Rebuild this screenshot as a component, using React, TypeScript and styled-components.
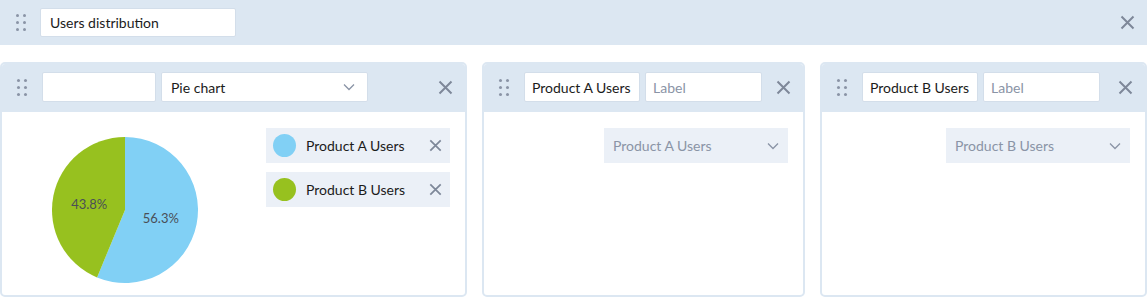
import React, { FC } from "react";
import styled, { createGlobalStyle } from "styled-components";

const colors = {
  panel: "#dce7f2",
  soft: "#ebf0f7",
  icon: "#7e8899",
  muted: "#8a94a6",
  text: "#1b1b1b",
  blue: "#81d0f5",
  green: "#97c11f",
};

const GlobalStyle = createGlobalStyle`
  body {
    margin: 0;
    background: #fff;
    font-family: Lato, "Noto Sans", sans-serif;
    font-size: 14px;
    color: ${colors.text};
  }
`;

const DragHandle: FC = () => (
  <Handle>
    {Array.from({ length: 6 }).map((_, i) => (
      <Dot key={i} />
    ))}
  </Handle>
);

const CloseIcon: FC<{ size?: number }> = ({ size = 15 }) => (
  <CloseButton>
    <svg width={size} height={size} viewBox="0 0 15 15">
      <path d="M1.5 1.5 L13.5 13.5 M13.5 1.5 L1.5 13.5" stroke={colors.icon} strokeWidth="2" strokeLinecap="butt" />
    </svg>
  </CloseButton>
);

const Chevron: FC = () => (
  <svg width="12" height="8" viewBox="0 0 12 8">
    <path d="M1 1.5 L6 6.5 L11 1.5" stroke={colors.muted} strokeWidth="1.3" fill="none" />
  </svg>
);

type Slice = { value: number; color: string };

const PieChart: FC<{ slices: Slice[] }> = ({ slices }) => {
  const r = 73;
  const cx = 75;
  const cy = 75;
  const total = slices.reduce((s, x) => s + x.value, 0);
  let start = 0;
  return (
    <svg width="150" height="150" viewBox="0 0 150 150">
      {slices.map((s, i) => {
        const a0 = (start / total) * Math.PI * 2;
        const a1 = ((start + s.value) / total) * Math.PI * 2;
        const mid = (a0 + a1) / 2;
        start += s.value;
        const x0 = cx + r * Math.sin(a0);
        const y0 = cy - r * Math.cos(a0);
        const x1 = cx + r * Math.sin(a1);
        const y1 = cy - r * Math.cos(a1);
        const large = a1 - a0 > Math.PI ? 1 : 0;
        const lx = cx + r * 0.5 * Math.sin(mid);
        const ly = cy - r * 0.5 * Math.cos(mid);
        const pct = ((s.value / total) * 100).toFixed(1) + "%";
        return (
          <g key={i}>
            <path d={`M${cx} ${cy} L${x0} ${y0} A${r} ${r} 0 ${large} 1 ${x1} ${y1} Z`} fill={s.color} />
            <text x={lx} y={ly + 6} textAnchor="middle" fontSize="13" fill="#4a4f57" fontFamily="Lato, sans-serif">
              {pct}
            </text>
          </g>
        );
      })}
    </svg>
  );
};

const App: FC = () => {
  return (
    <>
      <GlobalStyle />
      <TopBar>
        <DragHandle />
        <TitleInput>Users distribution</TitleInput>
        <Spacer />
        <CloseIcon />
      </TopBar>
      <Cards>
        <Card>
          <CardHeader>
            <DragHandle />
            <Field width={114} />
            <Select width={207}>
              <span>Pie chart</span>
              <Chevron />
            </Select>
            <Spacer />
            <CloseIcon />
          </CardHeader>
          <ChartBody>
            <PieWrap>
              <PieChart
                slices={[
                  { value: 56.25, color: colors.blue },
                  { value: 43.75, color: colors.green },
                ]}
              />
            </PieWrap>
            <Legend>
              <LegendItem>
                <Swatch color={colors.blue} />
                <LegendLabel>Product A Users</LegendLabel>
                <CloseIcon size={13} />
              </LegendItem>
              <LegendItem>
                <Swatch color={colors.green} />
                <LegendLabel>Product B Users</LegendLabel>
                <CloseIcon size={13} />
              </LegendItem>
            </Legend>
          </ChartBody>
        </Card>
        {["Product A Users", "Product B Users"].map((name) => (
          <Card key={name}>
            <CardHeader>
              <DragHandle />
              <Field width={116}>{name}</Field>
              <Field width={117} placeholder>
                Label
              </Field>
              <Spacer />
              <CloseIcon />
            </CardHeader>
            <SeriesBody>
              <SoftSelect>
                <span>{name}</span>
                <Chevron />
              </SoftSelect>
            </SeriesBody>
          </Card>
        ))}
      </Cards>
    </>
  );
};

export default App;

const TopBar = styled.div`
  display: flex;
  align-items: center;
  height: 45px;
  padding: 0 12px 0 16px;
  background: ${colors.panel};
  box-sizing: border-box;
`;

const Spacer = styled.div`
  flex: 1;
`;

const Handle = styled.div`
  display: grid;
  grid-template-columns: 3px 3px;
  grid-auto-rows: 3px;
  column-gap: 4px;
  row-gap: 4px;
  width: 10px;
  margin-right: 14px;
`;

const Dot = styled.span`
  width: 3px;
  height: 3px;
  border-radius: 50%;
  background: ${colors.muted};
`;

const CloseButton = styled.span`
  display: inline-flex;
  align-items: center;
  justify-content: center;
`;

const TitleInput = styled.div`
  width: 196px;
  height: 29px;
  display: flex;
  align-items: center;
  padding: 0 9px;
  box-sizing: border-box;
  background: #fff;
  border: 1px solid #d3deea;
  border-radius: 2px;
`;

const Cards = styled.div`
  display: grid;
  grid-template-columns: 467px 323px 1fr;
  column-gap: 15px;
  margin-top: 17px;
`;

const Card = styled.div`
  height: 235px;
  border: 2px solid ${colors.panel};
  border-radius: 5px;
  box-sizing: border-box;
  background: #fff;
  overflow: hidden;
  display: flex;
  flex-direction: column;
`;

const CardHeader = styled.div`
  display: flex;
  align-items: center;
  flex: none;
  height: 50px;
  margin: -2px -2px 0;
  padding: 0 14px 0 17px;
  background: ${colors.panel};

  & > ${Handle} {
    margin-right: 15px;
  }
`;

const Field = styled.div<{ width: number; placeholder?: boolean }>`
  width: ${(p) => p.width}px;
  height: 30px;
  display: flex;
  align-items: center;
  padding: 0 7px;
  margin-right: 5px;
  box-sizing: border-box;
  background: #fff;
  border: 1px solid #d3deea;
  border-radius: 2px;
  white-space: nowrap;
  color: ${(p) => (p.placeholder ? colors.muted : colors.text)};
`;

const Select = styled(Field)`
  justify-content: space-between;
  padding: 0 12px 0 9px;
`;

const ChartBody = styled.div`
  display: flex;
  justify-content: space-between;
  padding: 16px 15px 0 48px;
`;

const PieWrap = styled.div`
  padding-top: 7px;
`;

const Legend = styled.div`
  display: flex;
  flex-direction: column;
  gap: 9px;
`;

const LegendItem = styled.div`
  display: flex;
  align-items: center;
  width: 184px;
  height: 35px;
  padding: 0 8px 0 7px;
  box-sizing: border-box;
  background: ${colors.soft};
`;

const Swatch = styled.span<{ color: string }>`
  width: 23px;
  height: 23px;
  border-radius: 50%;
  background: ${(p) => p.color};
  margin-right: 10px;
`;

const LegendLabel = styled.span`
  flex: 1;
`;

const SeriesBody = styled.div`
  display: flex;
  justify-content: flex-end;
  padding: 16px 15px 0;
`;

const SoftSelect = styled.div`
  display: flex;
  align-items: center;
  justify-content: space-between;
  width: 184px;
  height: 35px;
  padding: 0 9px;
  box-sizing: border-box;
  background: ${colors.soft};
  color: ${colors.muted};
`;
